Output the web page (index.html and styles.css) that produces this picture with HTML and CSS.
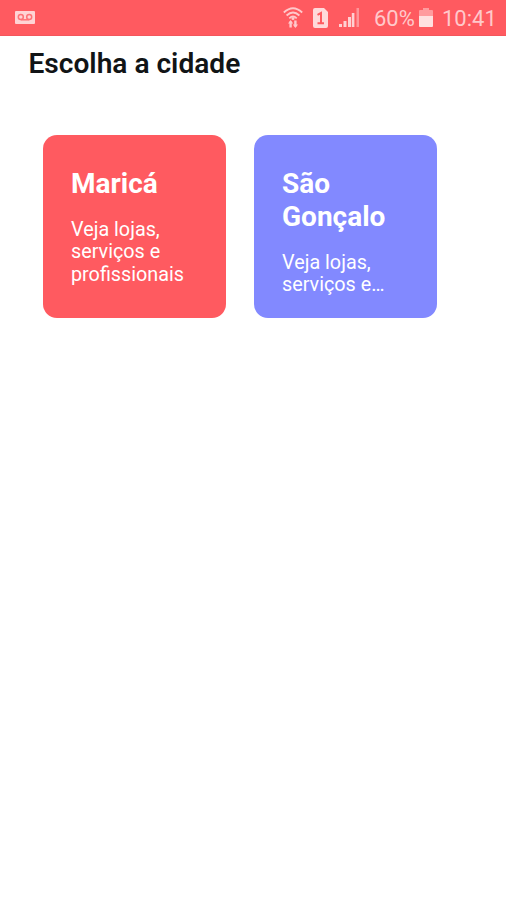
FILE: index.html
```html
<!DOCTYPE html>
<html lang="pt-BR">
<head>
  <meta charset="UTF-8">
  <meta name="viewport" content="width=device-width, initial-scale=1">
  <title>Escolha a cidade</title>
  <link rel="stylesheet" href="styles.css">
</head>
<body>
  <header class="status-bar">
    <svg class="voicemail" width="20" height="13" viewBox="0 0 20 13">
      <rect width="20" height="13" rx="1" fill="#ffd3d5"/>
      <g fill="none" stroke="#ff7378" stroke-width="1.5">
        <circle cx="5.8" cy="6" r="2.5"/>
        <circle cx="14.2" cy="6" r="2.5"/>
        <path d="M5.8 8.8h8.4"/>
      </g>
    </svg>
    <svg class="wifi" width="20" height="21" viewBox="0 0 20 21">
      <g fill="none" stroke="#ffc9cb" stroke-width="1.8">
        <path d="M.8 5.5Q10-3 19.2 5.5M3.6 8.5Q10 2.4 16.4 8.5M6.3 11.3Q10 7.8 13.7 11.3"/>
        <path d="M7.6 20.5v-6M12.4 13.5v6" stroke-width="2.4"/>
      </g>
      <path d="M5 16.5l2.6-3.5 2.6 3.5zM9.8 17.5l2.6 3.5 2.6-3.5z" fill="#ffc9cb"/>
      <circle cx="10" cy="11.5" r="1.5" fill="#ffc9cb"/>
    </svg>
    <svg class="sim" width="15" height="20" viewBox="0 0 15 20">
      <path d="M2 0h9l4 4v14a2 2 0 0 1-2 2H2a2 2 0 0 1-2-2V2a2 2 0 0 1 2-2z" fill="#ffd9da"/>
      <path d="M4.5 6.8L8 5v10.5M4.5 15.2h6.5" fill="none" stroke="#ff5a60" stroke-width="2"/>
    </svg>
    <svg class="signal" width="20" height="19" viewBox="0 0 20 19">
      <path d="M0 16h3v3H0zM4.5 13h3v6h-3zM9 9h3v10H9zM12.8 5h2.6v14h-2.6z" fill="#ffd0d2"/>
      <path d="M17.5 0H20v19h-2.5z" fill="#ff9599"/>
    </svg>
    <span class="percent">60%</span>
    <svg class="battery" width="14" height="19" viewBox="0 0 14 19">
      <path d="M4 0h6v2h3a1 1 0 0 1 1 1v5H0V3a1 1 0 0 1 1-1h3z" fill="#ff9b9e"/>
      <path d="M0 8h14v10a1 1 0 0 1-1 1H1a1 1 0 0 1-1-1z" fill="#ffe0e0"/>
    </svg>
    <span class="clock">10:41</span>
  </header>

  <main>
    <h1>Escolha a cidade</h1>
    <div class="cities">
      <section class="card marica">
        <h2>Maricá</h2>
        <p>Veja lojas, serviços e profissionais</p>
      </section>
      <section class="card goncalo">
        <h2>São Gonçalo</h2>
        <p>Veja lojas, serviços e…</p>
      </section>
    </div>
  </main>
</body>
</html>
```

FILE: styles.css
```css
* {
  box-sizing: border-box;
}

body {
  margin: 0;
  font-family: Roboto, "Liberation Sans", sans-serif;
  background: #fff;
}

.status-bar {
  display: flex;
  align-items: center;
  height: 36px;
  padding: 0 11px 0 15px;
  background: #ff5a60;
  color: #ffc9cb;
  font-size: 22px;
  line-height: 36px;
  white-space: nowrap;
  border-bottom: 1px solid #f4565c;
}

.status-bar svg {
  flex: none;
}

.wifi {
  margin-left: auto;
}

.sim {
  margin-left: 10px;
}

.signal {
  margin-left: 11px;
}

.percent {
  width: 41px;
  margin-left: 15px;
  padding-top: 3px;
}

.battery {
  margin-left: 4px;
}

.clock {
  width: 53px;
  margin-left: 9px;
  padding-top: 3px;
}

main {
  padding: 11px 28.5px;
}

h1 {
  margin: 0;
  font-size: 28.1px;
  line-height: 33px;
  font-weight: 600;
  color: #111416;
}

.cities {
  display: flex;
  gap: 28px;
  padding: 55px 14px;
}

.card {
  flex: none;
  width: 183px;
  height: 183px;
  padding: 32px 28.5px;
  border-radius: 14px;
  color: #fff;
}

.marica {
  background: #ff5a60;
}

.goncalo {
  background: #8289ff;
}

.card h2 {
  margin: 0 0 19px;
  font-size: 28px;
  line-height: 33px;
  font-weight: 700;
}

.card p {
  margin: 0;
  font-size: 19.8px;
  line-height: 22.4px;
}
```
